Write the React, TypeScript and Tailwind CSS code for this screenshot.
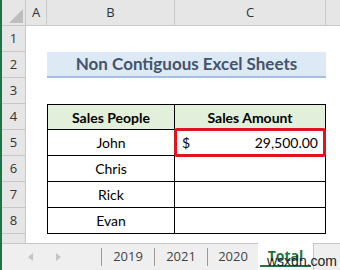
import React from "react";

const cellFont = { fontFamily: "Lato, 'Open Sans', sans-serif" };

const people = ["John", "Chris", "Rick", "Evan"];

function RowHead({ n, h = "h-[26px]" }: { n?: number; h?: string }) {
    return (
        <div className={`w-[24px] ${h} shrink-0 bg-[#e6e6e6] border-b border-r border-[#c8c8c8] flex items-center justify-center text-[13px] text-[#333]`}>
            {n}
        </div>
    );
}

export default function App() {
    return (
        <div className="w-[340px] h-[270px] flex bg-white overflow-hidden" style={{ fontFamily: "'Open Sans', 'Noto Sans', sans-serif" }}>
            <div className="w-[2px] h-full bg-[#217346] shrink-0" />
            <div className="flex-1 flex flex-col">
                <div className="h-[243px] flex flex-col overflow-hidden">
                    {/* column headers */}
                    <div className="flex h-[26px] shrink-0 bg-[#e6e6e6] border-b border-[#c8c8c8] text-[13px] text-[#333]">
                        <div className="w-[24px] border-r border-[#c8c8c8] relative">
                            <div className="absolute right-[2px] bottom-[2px] w-0 h-0 border-l-[14px] border-l-transparent border-b-[14px] border-b-[#bdbdbd]" />
                        </div>
                        <div className="w-[21px] border-r border-[#c8c8c8] flex items-center justify-center">A</div>
                        <div className="w-[128px] border-r border-[#c8c8c8] flex items-center justify-center">B</div>
                        <div className="w-[151px] border-r border-[#c8c8c8] flex items-center justify-center">C</div>
                        <div className="flex-1" />
                    </div>

                    {/* row 1 */}
                    <div className="flex">
                        <RowHead n={1} />
                    </div>

                    {/* row 2 title */}
                    <div className="flex">
                        <RowHead n={2} />
                        <div className="w-[21px]" />
                        <div className="w-[279px] h-[26px] bg-[#dde9f5] border-b-2 border-[#a3c1e0] flex items-center justify-center text-[17px] font-bold text-[#44546a]" style={cellFont}>
                            Non Contiguous Excel Sheets
                        </div>
                    </div>

                    {/* row 3 */}
                    <div className="flex">
                        <RowHead n={3} />
                    </div>

                    {/* row 4 table header */}
                    <div className="flex">
                        <RowHead n={4} />
                        <div className="w-[21px]" />
                        <div className="flex text-[14px] font-bold text-black" style={cellFont}>
                            <div className="w-[128px] h-[26px] bg-[#e2efda] border border-black flex items-center justify-center">Sales People</div>
                            <div className="w-[151px] h-[26px] bg-[#e2efda] border-y border-r border-black flex items-center justify-center">Sales Amount</div>
                        </div>
                    </div>

                    {/* rows 5 - 8 */}
                    {people.map((name, idx) => (
                        <div className="flex" key={idx}>
                            <RowHead n={idx + 5} />
                            <div className="w-[21px]" />
                            <div className="flex text-[14px] text-black" style={cellFont}>
                                <div className="w-[128px] h-[26px] border-x border-b border-black flex items-center justify-center">{name}</div>
                                <div className="w-[151px] h-[26px] border-r border-b border-black relative flex items-center justify-between px-[7px]">
                                    {idx == 0 ? <>
                                        <span>$</span>
                                        <span>29,500.00</span>
                                        <div className="absolute -left-[1px] -top-[2px] w-[152px] h-[29px] border-[3px] border-[#e0141e] rounded-[3px]" />
                                    </> : ""}
                                </div>
                            </div>
                        </div>
                    ))}

                    {/* row 9 partial */}
                    <div className="flex">
                        <RowHead h="h-[26px]" />
                    </div>
                </div>

                {/* sheet tabs */}
                <div className="h-[27px] bg-[#efefef] border-t border-[#c6c6c6] flex items-stretch text-[13px] text-[#444] relative">
                    <div className="w-[99px] flex items-center">
                        <span className="ml-[26px] w-0 h-0 border-y-[4px] border-y-transparent border-r-[5px] border-r-[#c4c4c4]" />
                        <span className="ml-[23px] w-0 h-0 border-y-[4px] border-y-transparent border-l-[5px] border-l-[#c4c4c4]" />
                    </div>
                    <div className="w-px my-[4px] bg-[#9a9a9a]" />
                    <div className="w-[52px] flex items-center justify-center">2019</div>
                    <div className="w-px my-[4px] bg-[#9a9a9a]" />
                    <div className="w-[52px] flex items-center justify-center">2021</div>
                    <div className="w-px my-[4px] bg-[#9a9a9a]" />
                    <div className="w-[50px] flex items-center justify-center">2020</div>
                    <div className="w-[56px] -mt-px bg-white border-r border-[#c6c6c6] flex flex-col">
                        <div className="flex-1 flex items-end justify-center font-bold text-[#217346] text-[14px] leading-[18px]">Total</div>
                        <div className="h-[2px] mx-[2px] mb-[3px] bg-[#217346]" />
                    </div>
                    <div className="absolute left-[265px] top-[10px] text-[14px] leading-[15px] text-[#222]" style={{ fontFamily: "'Liberation Sans', Arial, sans-serif" }}>wsxdn.com</div>
                </div>
            </div>
        </div>
    );
}
